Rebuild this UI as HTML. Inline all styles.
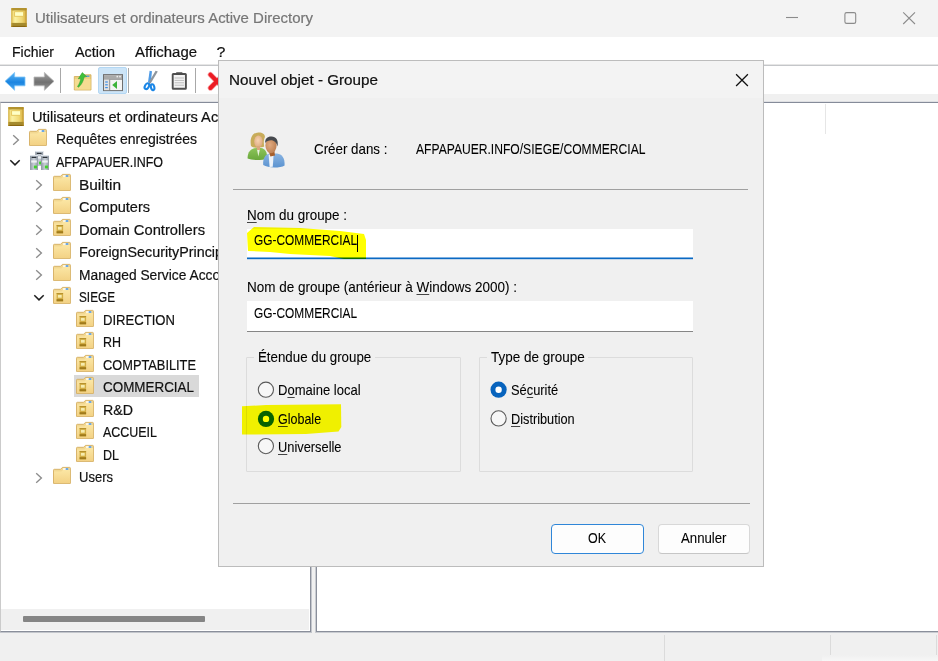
<!DOCTYPE html>
<html lang="fr">
<head>
<meta charset="utf-8">
<title>Utilisateurs et ordinateurs Active Directory</title>
<style>
html,body{margin:0;padding:0;}
body{width:938px;height:661px;overflow:hidden;background:#f0f0f0;position:relative;
  font-family:"Liberation Sans",sans-serif;color:#000;}
.abs{position:absolute;}
svg.abs{overflow:visible;}
.t{position:absolute;white-space:nowrap;line-height:1;transform-origin:0 0;}
.m{-webkit-text-stroke:0.22px currentColor;}
.dd{-webkit-text-stroke:0.08px currentColor;}
.t u{text-decoration:underline;text-underline-offset:1.5px;text-decoration-thickness:1px;text-decoration-color:rgba(0,0,0,.72);}
#titlebar{left:0;top:0;width:938px;height:37px;background:#f3f3f3;}
#menubar{left:0;top:37px;width:938px;height:28px;background:#fff;}
#tbline{left:0;top:64px;width:938px;height:2px;background:linear-gradient(#e6e6e6 50%,#c4c6c9 50%);}
#toolbar{left:0;top:66px;width:938px;height:28px;background:#fff;}
#tbgap{left:0;top:94px;width:938px;height:8px;background:#f0f0f0;}
.pane{background:#fff;box-sizing:border-box;border-style:solid;}
#leftpane{left:0;top:102px;width:311px;height:530px;border-width:1px;border-color:#858b99 #8a8f9b #8a8f9b #cbcbcb;box-shadow:1px 1px 0 #c3c6cc, 0 1px 0 #c3c6cc, 0 -1px 0 #dfe0e3;}
#rightpane{left:316px;top:102px;width:630px;height:530px;border-width:1px;border-color:#858b99 #8a8f9b #8a8f9b #8a8f9b;box-shadow:-1px 1px 0 #c9ccd1, 0 -1px 0 #dfe0e3;}
.vsep{width:1px;background:#dbdbdb;}
#statusbar{left:0;top:633px;width:938px;height:28px;background:#f0f0f0;}
#hscroll{left:1px;top:609px;width:308px;height:21px;background:#f0f0f0;}
#hthumb{left:23px;top:616px;width:182px;height:6px;background:#858585;border-radius:1px;}
#sel{left:74px;top:375px;width:125px;height:22px;background:#d9d9d9;}
#dlg{left:218px;top:60px;width:546px;height:507px;background:#f0f0f0;border:1px solid #bcbcbc;box-sizing:border-box;}
#dlgtitle{left:219px;top:61px;width:544px;height:37px;background:#f3f3f3;}
.hr{height:1px;background:#a0a0a0;}
.inp{background:#fff;box-sizing:border-box;}
.gb{border:1px solid #dcdcdc;box-sizing:border-box;border-radius:1px;}
.btn{box-sizing:border-box;background:#fdfdfd;border:1px solid #d8d8d8;border-bottom-color:#c6c6c6;border-radius:4px;}
.radio{width:15px;height:15px;border-radius:50%;box-sizing:border-box;border:1px solid #4a4a4a;background:#fafafa;}
.radio.on{border:4.5px solid #0067c0;background:#fff;}
.hl{mix-blend-mode:multiply;}
</style>
</head>
<body>
<div id="titlebar" class="abs"></div>
<div id="menubar" class="abs"></div>
<div id="tbline" class="abs"></div>
<div id="toolbar" class="abs"></div>
<div id="tbgap" class="abs"></div>
<div id="leftpane" class="abs pane"></div>
<div id="rightpane" class="abs pane"></div>
<div id="statusbar" class="abs"></div>
<div id="hscroll" class="abs"></div>
<div id="hthumb" class="abs"></div>
<div id="sel" class="abs"></div>
<div class="abs vsep" style="left:825px;top:104px;height:30px;background:#e6e6e6;"></div>
<div class="abs vsep" style="left:664px;top:635px;height:26px;"></div>
<div class="abs vsep" style="left:830px;top:635px;height:26px;"></div>
<div class="abs vsep" style="left:936px;top:635px;height:26px;"></div>
<div class="abs" style="left:822px;top:655px;width:116px;height:6px;background:linear-gradient(#f0f0f0,#f7f7f7);"></div>
<svg width="0" height="0" style="position:absolute">
<defs>
<linearGradient id="gBook" x1="0" x2="1" y1="0" y2="0"><stop offset="0" stop-color="#e9c95a"/><stop offset=".25" stop-color="#fbf1a2"/><stop offset=".7" stop-color="#f0d875"/><stop offset="1" stop-color="#d6ac3c"/></linearGradient>
<linearGradient id="gFold" x1="0" x2="0" y1="0" y2="1"><stop offset="0" stop-color="#fbe6a4"/><stop offset="1" stop-color="#f3d285"/></linearGradient>
<linearGradient id="gSrv" x1="0" x2="1" y1="0" y2="0"><stop offset="0" stop-color="#8f98a3"/><stop offset=".5" stop-color="#c9d0d8"/><stop offset="1" stop-color="#8f98a3"/></linearGradient>
<linearGradient id="gBack" x1="0" x2="0" y1="0" y2="1"><stop offset="0" stop-color="#5fb8f7"/><stop offset=".55" stop-color="#1a84e0"/><stop offset="1" stop-color="#4aa9f2"/></linearGradient>
<linearGradient id="gFwd" x1="0" x2="0" y1="0" y2="1"><stop offset="0" stop-color="#a3a3a3"/><stop offset=".55" stop-color="#707070"/><stop offset="1" stop-color="#999"/></linearGradient>
<symbol id="book" viewBox="0 0 16 19" overflow="visible">
  <rect x=".3" y="0" width="15.3" height="19" rx=".8" fill="url(#gBook)"/>
  <rect x=".3" y="0" width="15.3" height="2.4" rx=".8" fill="#b3932f"/>
  <rect x=".3" y="14.9" width="15.3" height="4.1" fill="#a58b2e"/>
  <rect x=".3" y="17.9" width="15.3" height="1.1" fill="#8a660f"/>
  <rect x=".3" y="0" width="1" height="19" fill="#c9a63e" opacity=".7"/>
  <rect x="14.6" y="0" width="1" height="19" fill="#b48a22" opacity=".7"/>
  <rect x="3.6" y="3.7" width="9" height="4.6" fill="#ffffc6" stroke="#e4c458" stroke-width=".9"/>
</symbol>
<symbol id="folder" viewBox="0 0 18 17" overflow="visible">
  <path d="M.5 3.2 Q.5 2.3 1.4 2.3 L7.6 2.3 L9.4 .4 L16.6 .4 Q17.4 .4 17.4 1.2 L17.4 16.4 L.5 16.4 Z" fill="#f2d892" stroke="#d5ae60" stroke-width=".9"/>
  <path d="M1 4.6 L8.4 4.6 L10 3 L17 3 L17 16 L1 16 Z" fill="url(#gFold)"/>
  <rect x="10" y="1.3" width="5.4" height="1.5" rx=".5" fill="#fff"/>
  <rect x="12.6" y="1.3" width="2.8" height="1.5" rx=".5" fill="#3d8fe6"/>
</symbol>
<symbol id="ou" viewBox="0 0 18 17" overflow="visible">
  <use href="#folder" x="0" y="0" width="18" height="17"/>
  <rect x="3.6" y="6" width="6.5" height="8.3" fill="#d3ae45"/>
  <rect x="3.6" y="6" width="6.5" height="1.1" fill="#b8922c"/>
  <rect x="3.6" y="12.2" width="6.5" height="2.1" fill="#a07a1a"/>
  <rect x="4.9" y="7.9" width="3.8" height="2.8" fill="#f6ecae"/>
</symbol>
<symbol id="chevR" viewBox="0 0 8 12" overflow="visible">
  <path d="M1.2 1.2 L6.4 6 L1.2 10.8" fill="none" stroke="#8c8c8c" stroke-width="1.35"/>
</symbol>
<symbol id="chevD" viewBox="0 0 12 8" overflow="visible">
  <path d="M1.3 1.3 L6 5.9 L10.7 1.3" fill="none" stroke="#1f1f1f" stroke-width="1.5"/>
</symbol>
<symbol id="tower" viewBox="0 0 8 15" overflow="visible">
  <rect x="0" y="0" width="8" height="15" rx=".6" fill="url(#gSrv)"/>
  <rect x="0" y="0" width="8" height="1" fill="#dfe4ea"/>
  <rect x="1.6" y="1.7" width="4.8" height="1.3" rx=".6" fill="#2b3138"/>
  <rect x="1.2" y="5.4" width="5.6" height="2.2" fill="#eef1f4"/>
  <rect x="3.9" y="10.6" width="3" height="2.8" fill="#3fd32a"/>
</symbol>
</defs>
</svg>
<!-- window title icon -->
<svg class="abs" style="left:11px;top:8px" width="16" height="19"><use href="#book" width="16" height="19"/></svg>
<!-- caption buttons -->
<svg class="abs" style="left:780px;top:6px" width="150" height="24" viewBox="780 6 150 24">
  <path d="M786 17.5 H798" stroke="#8b8b8b" stroke-width="1.1" fill="none"/>
  <rect x="844.9" y="12.6" width="10.8" height="10.8" rx="1.7" stroke="#8b8b8b" stroke-width="1.1" fill="none"/>
  <path d="M903.2 12.3 L915 24 M915 12.3 L903.2 24" stroke="#8b8b8b" stroke-width="1.1" fill="none"/>
</svg>
<!-- toolbar -->
<svg class="abs" style="left:0;top:66px" width="230" height="28" viewBox="0 66 230 28">
  <!-- back -->
  <path d="M5 81.3 L14.6 72.4 L14.6 77 L25 77 L25 85.8 L14.6 85.8 L14.6 90.3 Z" fill="url(#gBack)" stroke="#7cc4f8" stroke-width=".8" stroke-linejoin="round"/>
  <!-- forward -->
  <path d="M54 81.3 L44.4 72.4 L44.4 77 L34 77 L34 85.8 L44.4 85.8 L44.4 90.3 Z" fill="url(#gFwd)" stroke="#b5b5b5" stroke-width=".8" stroke-linejoin="round"/>
  <rect x="60" y="68" width="1" height="25" fill="#a8a8a8"/>
  <!-- up folder -->
  <path d="M74.3 76.5 L80 76.5 L82 74.8 L91 74.8 L91 90 L74.3 90 Z" fill="#ecd07f" stroke="#d1ab55" stroke-width=".8"/>
  <path d="M74.8 79 L90.5 79 L90.5 89.6 L74.8 89.6 Z" fill="#f5dc92"/>
  <rect x="86" y="75.6" width="3.4" height="1.2" fill="#3d8fe6"/>
  <path d="M77.5 86.5 C79.5 84 80.3 81 80.8 78.6 L78.3 78.8 L82.3 72.6 L86.6 76.6 L84 77.2 C83.4 81.2 81.5 84.8 78.5 87.2 Z" fill="#3fc03a" stroke="#2a9a2a" stroke-width=".5"/>
  <!-- console tree button (pressed) -->
  <rect x="98.5" y="67.5" width="28" height="26" rx="1.5" fill="#cce4f7" stroke="#b3d7f3" stroke-width="1"/>
  <rect x="103.5" y="74.6" width="19" height="16" fill="#f4f4f4" stroke="#6f6f6f" stroke-width="1"/>
  <rect x="104" y="75.1" width="18" height="3.4" fill="#a9a9a9"/>
  <rect x="104" y="78.6" width="18" height="1" fill="#6f6f6f"/>
  <rect x="116.5" y="75.8" width="1.6" height="1.6" fill="#eee"/><rect x="119.2" y="75.8" width="1.6" height="1.6" fill="#eee"/>
  <rect x="104" y="79.6" width="5.2" height="10.5" fill="#e2e2e2"/>
  <rect x="109.2" y="79.6" width="1" height="10.5" fill="#8a8a8a"/>
  <rect x="105.2" y="81.4" width="2.6" height="1.2" fill="#3d8fe6"/><rect x="105.2" y="84.2" width="2.6" height="1.2" fill="#3d8fe6"/><rect x="105.2" y="87" width="2.6" height="1.2" fill="#3d8fe6"/>
  <path d="M112.2 85 L117 81 L117 89 Z" fill="#3db33a"/>
  <rect x="128" y="68" width="1" height="25" fill="#a8a8a8"/>
  <!-- scissors -->
  <path d="M149.6 70.8 L152 71.2 L150.8 82.6 L148 82.2 Z" fill="#4f9be6"/>
  <path d="M157.8 71.6 L155.6 70.8 L148.6 82.4 L150.6 83.6 Z" fill="#8e969e"/>
  <ellipse cx="146.9" cy="86.2" rx="1.9" ry="3.1" transform="rotate(30 146.9 86.2)" fill="none" stroke="#1b86e6" stroke-width="2.1"/>
  <ellipse cx="152.6" cy="87.2" rx="1.7" ry="3" transform="rotate(-14 152.6 87.2)" fill="none" stroke="#1b86e6" stroke-width="2.1"/>
  <!-- clipboard -->
  <rect x="172.7" y="74" width="13.2" height="14.8" rx=".6" fill="#f4f4f4" stroke="#505050" stroke-width="1.9"/>
  <rect x="176" y="72.2" width="6.6" height="2.8" rx=".8" fill="#4c4c4c"/>
  <path d="M174.6 78 H184 M174.6 80.4 H184 M174.6 82.8 H184 M174.6 85.2 H184" stroke="#bdbdbd" stroke-width="1"/>
  <rect x="195" y="68" width="1" height="25" fill="#a8a8a8"/>
  <!-- delete X -->
  <path d="M210.4 74.6 L223.6 88 M223.6 74.6 L210.4 88" stroke="#f7a3a6" stroke-width="5.4" stroke-linecap="round" fill="none"/>
  <path d="M210.4 74.6 L223.6 88 M223.6 74.6 L210.4 88" stroke="#ec1c24" stroke-width="4" stroke-linecap="round" fill="none"/>
</svg>
<svg class="abs" style="left:8px;top:107.3px" width="16" height="19"><use href="#book" width="16" height="19"/></svg>
<svg class="abs" style="left:28.7px;top:129.2px" width="18" height="17"><use href="#folder" width="18" height="17"/></svg>
<svg class="abs" style="left:11.6px;top:133.8px" width="8" height="12"><use href="#chevR" width="8" height="12"/></svg>
<svg class="abs" style="left:30px;top:151.2px" width="19" height="19" viewBox="0 0 19 19"><use href="#tower" x="5.2" y="0" width="8" height="15"/><use href="#tower" x="0" y="4" width="8" height="15"/><use href="#tower" x="11" y="4" width="8" height="15"/></svg>
<svg class="abs" style="left:9.0px;top:158.9px" width="12" height="8"><use href="#chevD" width="12" height="8"/></svg>
<svg class="abs" style="left:52.7px;top:174.3px" width="18" height="17"><use href="#folder" width="18" height="17"/></svg>
<svg class="abs" style="left:35.4px;top:178.9px" width="8" height="12"><use href="#chevR" width="8" height="12"/></svg>
<svg class="abs" style="left:52.7px;top:196.8px" width="18" height="17"><use href="#folder" width="18" height="17"/></svg>
<svg class="abs" style="left:35.4px;top:201.4px" width="8" height="12"><use href="#chevR" width="8" height="12"/></svg>
<svg class="abs" style="left:52.7px;top:219.3px" width="18" height="17"><use href="#ou" width="18" height="17"/></svg>
<svg class="abs" style="left:35.4px;top:223.9px" width="8" height="12"><use href="#chevR" width="8" height="12"/></svg>
<svg class="abs" style="left:52.7px;top:241.9px" width="18" height="17"><use href="#folder" width="18" height="17"/></svg>
<svg class="abs" style="left:35.4px;top:246.5px" width="8" height="12"><use href="#chevR" width="8" height="12"/></svg>
<svg class="abs" style="left:52.7px;top:264.4px" width="18" height="17"><use href="#folder" width="18" height="17"/></svg>
<svg class="abs" style="left:35.4px;top:269.0px" width="8" height="12"><use href="#chevR" width="8" height="12"/></svg>
<svg class="abs" style="left:52.7px;top:286.9px" width="18" height="17"><use href="#ou" width="18" height="17"/></svg>
<svg class="abs" style="left:32.8px;top:294.0px" width="12" height="8"><use href="#chevD" width="12" height="8"/></svg>
<svg class="abs" style="left:76.3px;top:309.5px" width="18" height="17"><use href="#ou" width="18" height="17"/></svg>
<svg class="abs" style="left:76.3px;top:332.0px" width="18" height="17"><use href="#ou" width="18" height="17"/></svg>
<svg class="abs" style="left:76.3px;top:354.5px" width="18" height="17"><use href="#ou" width="18" height="17"/></svg>
<svg class="abs" style="left:76.3px;top:377.1px" width="18" height="17"><use href="#ou" width="18" height="17"/></svg>
<svg class="abs" style="left:76.3px;top:399.6px" width="18" height="17"><use href="#ou" width="18" height="17"/></svg>
<svg class="abs" style="left:76.3px;top:422.1px" width="18" height="17"><use href="#ou" width="18" height="17"/></svg>
<svg class="abs" style="left:76.3px;top:444.7px" width="18" height="17"><use href="#ou" width="18" height="17"/></svg>
<svg class="abs" style="left:52.7px;top:467.2px" width="18" height="17"><use href="#folder" width="18" height="17"/></svg>
<svg class="abs" style="left:35.4px;top:471.8px" width="8" height="12"><use href="#chevR" width="8" height="12"/></svg>
<span id="wtitle" class="t m" style="left:35px;top:10.84px;font-size:16px;color:#767676;transform:scale(0.9360,0.9200);">Utilisateurs et ordinateurs Active Directory</span>
<span id="m1" class="t m" style="left:12px;top:44.84px;font-size:16px;color:#111;transform:scale(0.8747,0.9200);">Fichier</span>
<span id="m2" class="t m" style="left:75px;top:44.84px;font-size:16px;color:#111;transform:scale(0.8995,0.9200);">Action</span>
<span id="m3" class="t m" style="left:135px;top:44.84px;font-size:16px;color:#111;transform:scale(0.9334,0.9200);">Affichage</span>
<span id="m4" class="t m" style="left:216.5px;top:44.84px;font-size:16px;color:#111;transform:scale(1.0000,0.9200);">?</span>
<span id="tr0" class="t m" style="left:32px;top:109.94px;font-size:16px;color:#111;transform:scale(0.9143,0.9200);">Utilisateurs et ordinateurs Active Directory</span>
<span id="tr1" class="t m" style="left:56px;top:132.47px;font-size:16px;color:#111;transform:scale(0.8759,0.9200);">Requêtes enregistrées</span>
<span id="tr2" class="t m" style="left:56px;top:155.00px;font-size:16px;color:#111;transform:scale(0.7799,0.9200);">AFPAPAUER.INFO</span>
<span id="tr3" class="t m" style="left:79px;top:177.53px;font-size:16px;color:#111;transform:scale(0.9638,0.9200);">Builtin</span>
<span id="tr4" class="t m" style="left:79px;top:200.06px;font-size:16px;color:#111;transform:scale(0.9073,0.9200);">Computers</span>
<span id="tr5" class="t m" style="left:79px;top:222.59px;font-size:16px;color:#111;transform:scale(0.9201,0.9200);">Domain Controllers</span>
<span id="tr6" class="t m" style="left:79px;top:245.12px;font-size:16px;color:#111;transform:scale(0.8944,0.9200);">ForeignSecurityPrincipals</span>
<span id="tr7" class="t m" style="left:79px;top:267.65px;font-size:16px;color:#111;transform:scale(0.8627,0.9200);">Managed Service Accounts</span>
<span id="tr8" class="t m" style="left:79px;top:290.18px;font-size:16px;color:#111;transform:scale(0.7361,0.9200);">SIEGE</span>
<span id="tr9" class="t m" style="left:103px;top:312.71px;font-size:16px;color:#111;transform:scale(0.8182,0.9200);">DIRECTION</span>
<span id="tr10" class="t m" style="left:103px;top:335.24px;font-size:16px;color:#111;transform:scale(0.7789,0.9200);">RH</span>
<span id="tr11" class="t m" style="left:103px;top:357.77px;font-size:16px;color:#111;transform:scale(0.8005,0.9200);">COMPTABILITE</span>
<span id="tr12" class="t m" style="left:103px;top:380.30px;font-size:16px;color:#111;transform:scale(0.8391,0.9200);">COMMERCIAL</span>
<span id="tr13" class="t m" style="left:103px;top:402.83px;font-size:16px;color:#111;transform:scale(0.8881,0.9200);">R&amp;D</span>
<span id="tr14" class="t m" style="left:103px;top:425.36px;font-size:16px;color:#111;transform:scale(0.7786,0.9200);">ACCUEIL</span>
<span id="tr15" class="t m" style="left:103px;top:447.89px;font-size:16px;color:#111;transform:scale(0.7823,0.9200);">DL</span>
<span id="tr16" class="t m" style="left:79px;top:470.42px;font-size:16px;color:#111;transform:scale(0.8138,0.9200);">Users</span>
<div id="dlg" class="abs"></div>
<div id="dlgtitle" class="abs"></div>
<div class="abs hr" style="left:233px;top:189px;width:515px;"></div>
<div class="abs hr" style="left:233px;top:503px;width:517px;"></div>
<div class="abs inp" style="left:247px;top:229px;width:446px;height:30px;background:linear-gradient(#fff 28px,#7fb1e2 28px,#7fb1e2 29px,#0a69c2 29px);"></div>
<div class="abs" style="left:247px;top:259px;width:446px;height:1px;background:#c3d6ea;"></div>
<div class="abs inp" style="left:247px;top:301px;width:446px;height:31px;border-bottom:1px solid #868686;"></div>
<div class="abs gb" style="left:246px;top:357px;width:215px;height:115px;"></div>
<div class="abs gb" style="left:479px;top:357px;width:214px;height:115px;"></div>
<div class="abs" style="left:254px;top:350px;width:121px;height:16px;background:#f0f0f0;"></div>
<div class="abs" style="left:487px;top:350px;width:101px;height:16px;background:#f0f0f0;"></div>
<div class="abs btn" style="left:551px;top:524px;width:93px;height:30px;border-color:#2f86d8;"></div>
<div class="abs btn" style="left:658px;top:524px;width:92px;height:30px;"></div>
<div class="abs" style="left:357px;top:235px;width:1px;height:17px;background:#000;"></div>
<svg class="abs" style="left:250px;top:375px" width="270" height="90" viewBox="250 375 270 90">
  <circle cx="265.9" cy="389.7" r="7.6" fill="#f7f7f7" stroke="#5a5a5a" stroke-width="1.1"/>
  <circle cx="266" cy="418.9" r="8.1" fill="#0763bd"/><circle cx="266" cy="418.9" r="3.2" fill="#fff"/>
  <circle cx="265.9" cy="446.1" r="7.6" fill="#f7f7f7" stroke="#5a5a5a" stroke-width="1.1"/>
  <circle cx="498.6" cy="389.7" r="8.1" fill="#0763bd"/><circle cx="498.6" cy="389.7" r="3.2" fill="#fff"/>
  <circle cx="498.6" cy="418.4" r="7.6" fill="#f7f7f7" stroke="#5a5a5a" stroke-width="1.1"/>
</svg>
<svg class="abs" style="left:729px;top:68px" width="26" height="24" viewBox="729 68 26 24">
  <path d="M736.1 74.3 L747.9 86 M747.9 74.3 L736.1 86" stroke="#111" stroke-width="1.25" fill="none"/>
</svg>
<svg class="abs" style="left:244px;top:128px" width="46" height="44" viewBox="244 128 46 44">
  <defs>
    <linearGradient id="gGreen" x1="0" x2="0" y1="0" y2="1"><stop offset="0" stop-color="#8cc45a"/><stop offset="1" stop-color="#6aa83c"/></linearGradient>
    <linearGradient id="gBlue" x1="0" x2="0" y1="0" y2="1"><stop offset="0" stop-color="#8ab4e2"/><stop offset="1" stop-color="#5b93d0"/></linearGradient>
    <radialGradient id="gSkin1" cx=".45" cy=".4" r=".7"><stop offset="0" stop-color="#f7d3b0"/><stop offset="1" stop-color="#d9a27a"/></radialGradient>
    <radialGradient id="gSkin2" cx=".4" cy=".45" r=".7"><stop offset="0" stop-color="#e0aa80"/><stop offset="1" stop-color="#b97a4c"/></radialGradient>
  </defs>
  <!-- woman -->
  <path d="M247.6 158.6 C247.4 152 250.6 148.6 256 148 L261 148 C265 148.6 267.2 151.6 267.2 158.6 C262 160.6 252 160.6 247.6 158.6 Z" fill="url(#gGreen)"/>
  <path d="M257 149.5 L258.4 156.5 L259.8 149.5 Z" fill="#e9f2df"/>
  <path d="M251 146 C249.6 139 252 132.6 258.4 132.4 C263 132.3 265.4 134.4 264.8 137.4 C263.6 139.6 263.6 143 264.2 146.6 C262 148 254 148.6 251 146 Z" fill="#c8ac5a"/>
  <ellipse cx="258.4" cy="141.6" rx="4.2" ry="6" fill="url(#gSkin1)"/>
  <rect x="256.8" y="146" width="3.2" height="4" fill="#dba77d"/>
  <!-- man -->
  <path d="M263.2 165 C262.6 158 265.4 154 270 153.4 L277 153.4 C282 154 285 158 284.6 165.4 C280 168.2 268 168.2 263.2 165 Z" fill="url(#gBlue)"/>
  <path d="M268.6 154.5 L269.6 167 L272.8 166.8 L273.6 154.5 Z" fill="#eef3f9"/>
  <path d="M268.4 150 L274.2 150 L275 155.6 L270.4 156.6 Z" fill="#a8602c"/>
  <ellipse cx="271" cy="145.6" rx="5.6" ry="7.6" fill="url(#gSkin2)"/>
  <path d="M265.2 143 C264.8 138.6 267.6 136.4 271.6 136.6 C276 136.8 278.6 140 277.6 146.4 C276.8 143.6 275.4 141.2 272.8 140.4 C270 139.8 266.8 140.6 265.2 143 Z" fill="#46494d"/>
</svg>

<span id="dtitle" class="t m" style="left:229px;top:71.80px;font-size:15px;color:#111;transform:scale(1.0153,1.0000);">Nouvel objet - Groupe</span>
<span id="d1" class="t dd" style="left:314px;top:142.23px;font-size:14.5px;color:#000;transform:scale(0.9198,1.0000);">Créer dans :</span>
<span id="d2" class="t dd" style="left:415.5px;top:142.23px;font-size:14.5px;color:#000;transform:scale(0.8345,1.0000);">AFPAPAUER.INFO/SIEGE/COMMERCIAL</span>
<span id="d3" class="t dd" style="left:247px;top:207.73px;font-size:14.5px;color:#000;transform:scale(0.9257,1.0000);"><u>N</u>om du groupe :</span>
<span id="d4" class="t dd" style="left:254px;top:232.73px;font-size:14.5px;color:#000;transform:scale(0.8196,1.0000);">GG-COMMERCIAL</span>
<span id="d5" class="t dd" style="left:247px;top:279.73px;font-size:14.5px;color:#000;transform:scale(0.9305,1.0000);">Nom de groupe (antérieur à <u>W</u>indows 2000) :</span>
<span id="d6" class="t dd" style="left:254.3px;top:305.73px;font-size:14.5px;color:#000;transform:scale(0.8204,1.0000);">GG-COMMERCIAL</span>
<span id="d7" class="t dd" style="left:258.2px;top:349.73px;font-size:14.5px;color:#000;transform:scale(0.9176,1.0000);">Étendue du groupe</span>
<span id="d8" class="t dd" style="left:278px;top:382.73px;font-size:14.5px;color:#000;transform:scale(0.8987,1.0000);">D<u>o</u>maine local</span>
<span id="d9" class="t dd" style="left:278px;top:412.23px;font-size:14.5px;color:#000;transform:scale(0.8623,1.0000);"><u>G</u>lobale</span>
<span id="d10" class="t dd" style="left:278px;top:439.73px;font-size:14.5px;color:#000;transform:scale(0.8852,1.0000);"><u>U</u>niverselle</span>
<span id="d11" class="t dd" style="left:490.5px;top:349.73px;font-size:14.5px;color:#000;transform:scale(0.9297,1.0000);">Type de groupe</span>
<span id="d12" class="t dd" style="left:510.8px;top:382.73px;font-size:14.5px;color:#000;transform:scale(0.8869,1.0000);">Sé<u>c</u>urité</span>
<span id="d13" class="t dd" style="left:511.3px;top:412.23px;font-size:14.5px;color:#000;transform:scale(0.8781,1.0000);"><u>D</u>istribution</span>
<span id="d14" class="t dd" style="left:588px;top:530.73px;font-size:14.5px;color:#000;transform:scale(0.8591,1.0000);">OK</span>
<span id="d15" class="t dd" style="left:680.5px;top:530.73px;font-size:14.5px;color:#000;transform:scale(0.9103,1.0000);">Annuler</span>
<svg class="abs hl" style="left:0;top:0;" width="938" height="661" viewBox="0 0 938 661">
<polygon fill="#ffff00" points="247,233 254,227 300,228 340,231 364,234 366,240 366,259 344,259 330,256 290,254 270,252 248,251"/>
<polygon fill="#ffff00" points="242,406.3 266,405 341,404.2 341.3,427 338.5,431.5 306,434 242,434.5"/>
</svg>
</body>
</html>
